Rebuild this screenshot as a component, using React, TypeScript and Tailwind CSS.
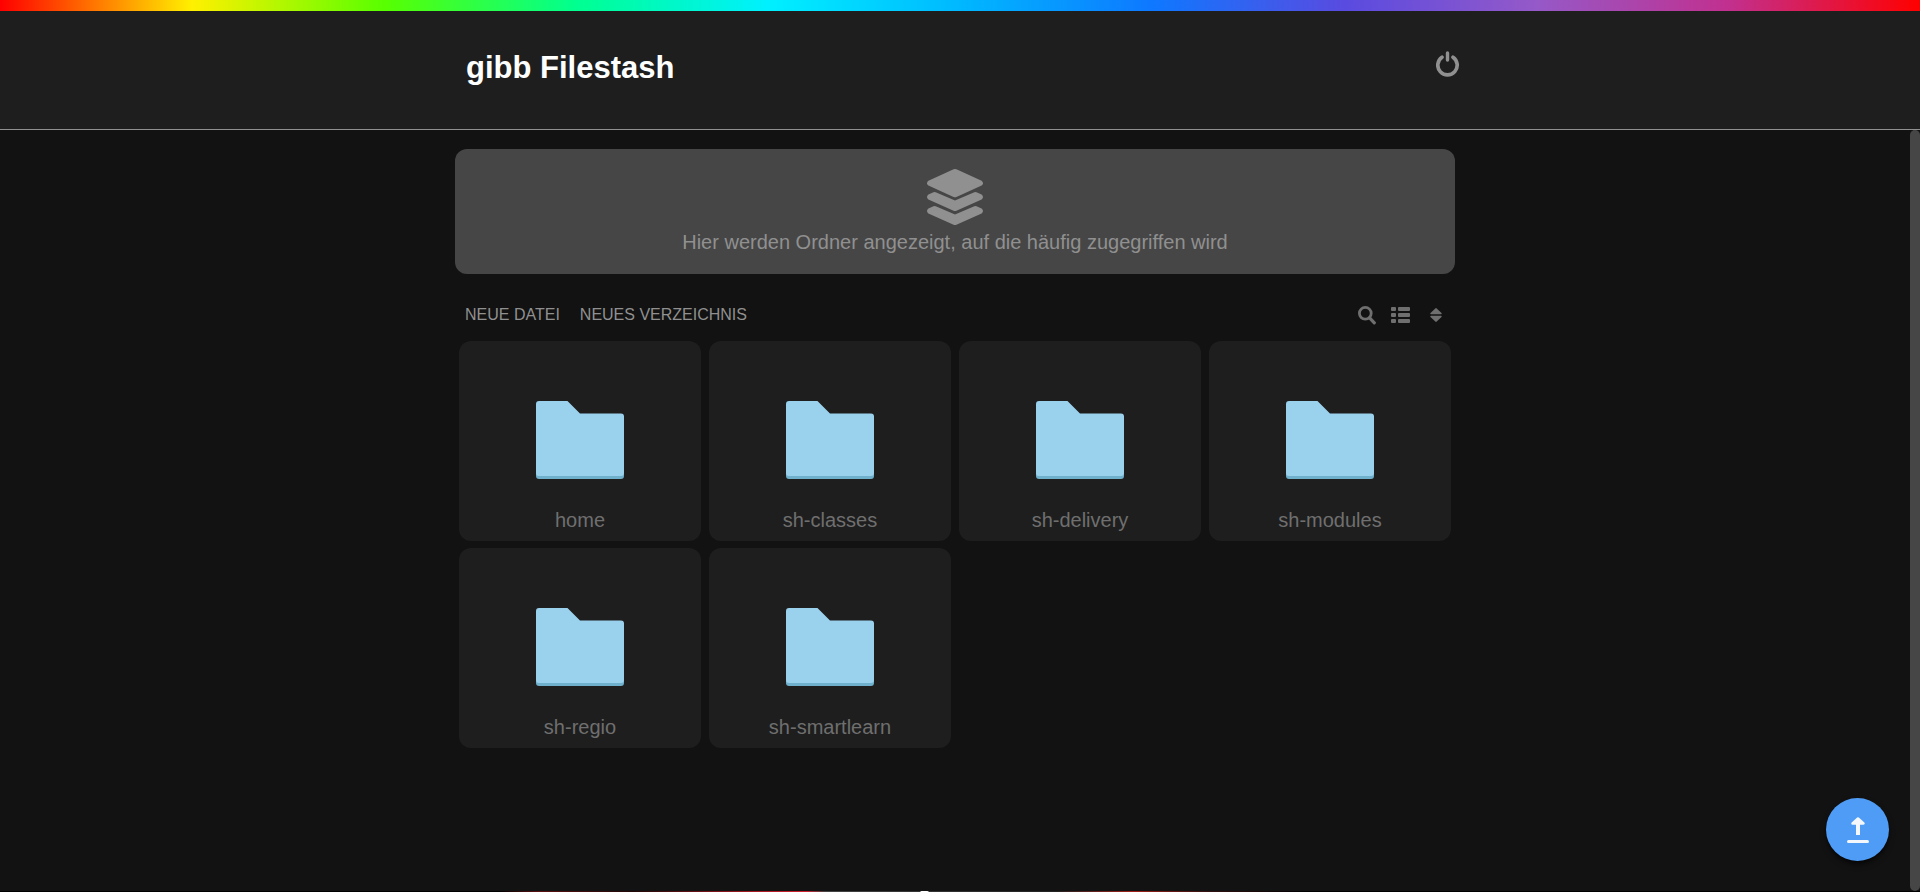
const folders = ['home', 'sh-classes', 'sh-delivery', 'sh-modules', 'sh-regio', 'sh-smartlearn'];

function PowerIcon() {
  return (
    <svg viewBox="0 0 24 26" fill="none" stroke="currentColor" strokeLinecap="round" className="h-[26px] w-6">
      <path d="M11.5 2V9" strokeWidth="3.4" />
      <path d="M6 6.200a9.700 9.700 0 1 0 11 0" strokeWidth="3.700" />
    </svg>
  );
}

function LayersIcon() {
  return (
    <svg viewBox="0 0 56 56" fill="currentColor" className="size-14">
      <path d="M26.600.300q1.400-.600 2.800 0L54.600 11.800q2.800 2.400 0 4.800L29.400 28q-1.400.600-2.800 0L1.400 16.600q-2.800-2.400 0-4.800z" />
      <path d="M1.400 25.600L6.500 23.300q1.400-.500 2.800.100L28 31.400l18.700-8q1.400-.600 2.800-.100l5.100 2.300q2.800 2.400 0 4.800L29.400 41.800q-1.400.600-2.800 0L1.400 30.400q-2.800-2.400 0-4.800z" />
      <path d="M1.400 39.600L6.500 37.300q1.400-.500 2.800.100L28 45.400l18.700-8q1.400-.600 2.800-.100l5.100 2.300q2.800 2.400 0 4.800L29.400 55.800q-1.400.600-2.800 0L1.400 44.400q-2.800-2.400 0-4.800z" />
    </svg>
  );
}

function SearchIcon() {
  return (
    <svg viewBox="0 0 18 19" fill="none" stroke="currentColor" className="h-[19px] w-[18px]">
      <circle cx="7.300" cy="7.300" r="5.900" strokeWidth="2.800" />
      <path d="M11.600 11.800L16.300 16.800" strokeWidth="3.200" strokeLinecap="round" />
    </svg>
  );
}

function ListIcon() {
  return (
    <svg viewBox="0 0 19 16" fill="currentColor" className="h-4 w-[19px]">
      {[0, 6, 12].map((y) => (
        <g key={y}>
          <rect x="0" y={y} width="5" height="4" rx="1" />
          <rect x="7" y={y} width="12" height="4" rx="1" />
        </g>
      ))}
    </svg>
  );
}

function SortIcon() {
  return (
    <svg viewBox="0 0 12 14" fill="currentColor" className="h-3.5 w-3">
      <path d="M5.300.400q.700-.600 1.400 0L11.500 5q.600 1-.500 1.200H1Q-.100 6 .500 5z" />
      <path d="M5.300 13.600q.700.600 1.400 0L11.500 9q.600-1-.500-1.200H1Q-.100 8 .500 9z" />
    </svg>
  );
}

function FolderIcon() {
  return (
    <svg viewBox="0 0 88 78" className="h-[78px] w-[88px]">
      <path fill="#6fb0cc" d="M0 60H88V75q0 3-3 3H3q-3 0-3-3z" />
      <path fill="#9ad1ed" d="M3 0H31.500L44 12.500H85q3 0 3 3V72q0 3-3 3H3q-3 0-3-3V3q0-3 3-3z" />
    </svg>
  );
}

function UploadIcon() {
  return (
    <svg viewBox="0 0 24 28" fill="none" stroke="currentColor" className="h-7 w-6">
      <path d="M12 19V7" strokeWidth="4" />
      <path d="M12 2.500L17.500 7.500H6.500z" fill="currentColor" strokeWidth="2.500" strokeLinejoin="round" />
      <path d="M2.500 25.500H21.500" strokeWidth="3" strokeLinecap="round" />
    </svg>
  );
}

function Header() {
  return (
    <header className="border-b border-[#909090] bg-[#1e1e1e]">
      <div className="h-[11px] bg-[linear-gradient(to_right,#ff0000,#fff000_10%,#58ff00_20%,#00ff90_30%,#00f0ff_40%,#00b8ff_50%,#0e78ff_60%,#594be0_70%,#9559c8_80%,#c1308f_90%,#ff0000)]" />
      <div className="mx-auto flex h-[118px] max-w-[1000px] items-start justify-between pt-9 pl-1.5">
        <h1 className="pt-px text-[31px] leading-10 font-bold text-white">gibb Filestash</h1>
        <button type="button" aria-label="Abmelden" className="mt-1 text-[#909090]">
          <PowerIcon />
        </button>
      </div>
    </header>
  );
}

export default function App() {
  return (
    <div className="flex h-screen flex-col bg-black font-['Liberation_Sans',Arial,sans-serif]">
      <Header />
      <div className="flex min-h-0 flex-1 bg-[#121212]">
        <main className="min-w-0 flex-1 overflow-hidden pt-[19px]">
          <div className="mx-auto max-w-[1000px]">
            <section className="flex flex-col items-center rounded-xl bg-[#464646] py-5 text-[#909090]">
              <LayersIcon />
              <p className="pt-[5px] text-xl leading-6">Hier werden Ordner angezeigt, auf die häufig zugegriffen wird</p>
            </section>

            <div className="flex items-center justify-between px-2.5 pt-[29px] pb-3.5 text-[#909090]">
              <div className="flex gap-5 text-base leading-6">
                <button type="button">NEUE DATEI</button>
                <button type="button">NEUES VERZEICHNIS</button>
              </div>
              <div className="flex items-center text-[#6f6f6f]">
                <button type="button" aria-label="Suchen" className="mr-[15px]"><SearchIcon /></button>
                <button type="button" aria-label="Listenansicht" className="mr-5"><ListIcon /></button>
                <button type="button" aria-label="Sortieren" className="mr-[3px]"><SortIcon /></button>
              </div>
            </div>

            <ul className="grid grid-cols-4 gap-x-2 gap-y-[7px] px-1">
              {folders.map((name) => (
                <li key={name}>
                  <a href={`#${name}`} className="flex h-[200px] flex-col items-center justify-between rounded-xl bg-[#1e1e1e] pt-[60px] pb-[9px]">
                    <FolderIcon />
                    <span className="text-xl leading-6 text-[#6f6f6f]">{name}</span>
                  </a>
                </li>
              ))}
            </ul>
          </div>
        </main>
        <div className="w-2.5 rounded-md bg-[#464646]" />
      </div>
      <div className="h-px bg-[linear-gradient(to_right,#000_26%,#5a1010_28%,#200808_33%,#a01820_39%,#d02030_42%,#444_43%,#333_47.900%,#fff_48%,#fff_48.300%,#333_48.400%,#222_55%,#a02018_59%,#301010_63%,#000_68%)]" />
      <button
        type="button"
        aria-label="Hochladen"
        className="fixed right-[31px] bottom-[31px] flex size-[63px] items-center justify-center rounded-full bg-[#4f9cf6] text-[#f4f8fc] shadow-md shadow-black/60"
      >
        <UploadIcon />
      </button>
    </div>
  );
}
